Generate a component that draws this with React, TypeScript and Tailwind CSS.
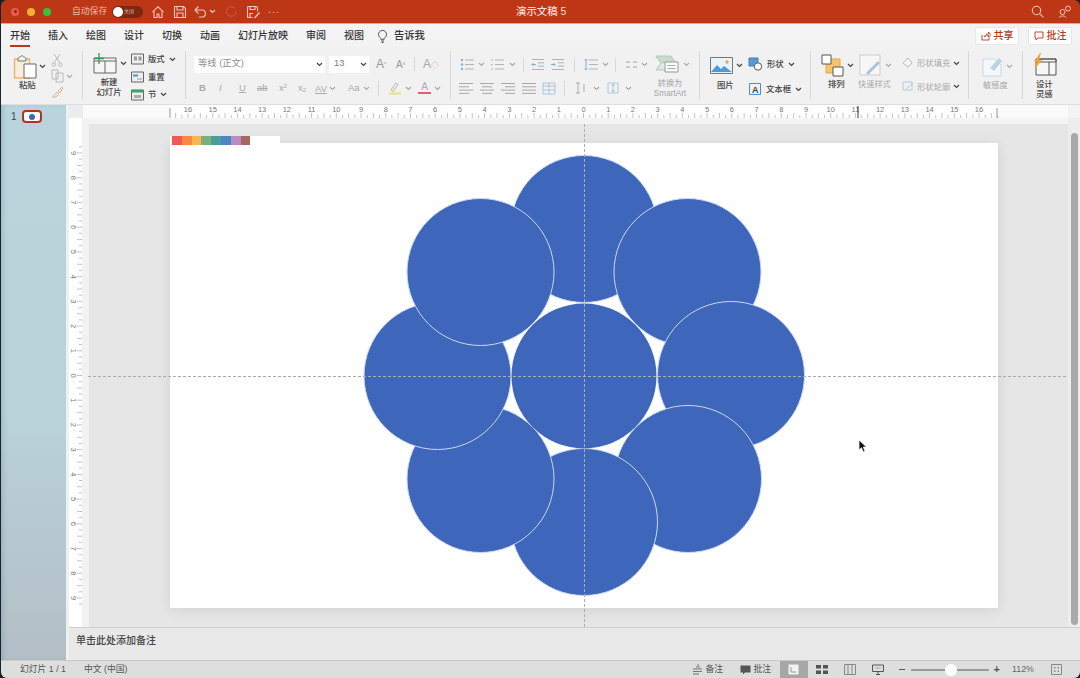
import type { ReactNode } from "react";

const TABS = ["开始", "插入", "绘图", "设计", "切换", "动画", "幻灯片放映", "审阅", "视图"];

const CIRCLES = [
  [584, 229],
  [687.5, 272],
  [731, 375],
  [688, 479],
  [584, 522],
  [480.5, 479],
  [437.5, 376],
  [480.5, 272],
];

const UNIT = 24.72;
const ZERO_X = 583.5;
const ZERO_Y = 375.5;

const PALETTE = ["#ef5a55", "#f58a45", "#f9b54e", "#7fae7c", "#4a9d9c", "#4f86c0", "#b88cc0", "#a5685a"];

function Chev({ faded = false, className = "" }: { faded?: boolean; className?: string }) {
  return (
    <svg width="7" height="5" viewBox="0 0 7 5" className={`shrink-0 ${className}`}>
      <path d="M1 1l2.5 2.5L6 1" fill="none" stroke={faded ? "#aaa" : "#444"} strokeWidth="1.2" />
    </svg>
  );
}

function Ico({ w, h, children, className = "" }: { w: number; h: number; children: ReactNode; className?: string }) {
  return (
    <svg width={w} height={h} viewBox={`0 0 ${w} ${h}`} fill="none" className={`shrink-0 ${className}`}>
      {children}
    </svg>
  );
}

function Sep({ className = "" }: { className?: string }) {
  return <div className={`w-px self-stretch bg-[#d8d8d8] shrink-0 ${className}`} />;
}

function Lines({ kind, stroke = "#a9a9a9" }: { kind: "l" | "c" | "r" | "j"; stroke?: string }) {
  const rows = [
    [1, 15],
    kind === "l" ? [1, 11] : kind === "c" ? [3, 13] : kind === "r" ? [5, 15] : [1, 15],
    [1, 15],
    kind === "l" ? [1, 11] : kind === "c" ? [3, 13] : kind === "r" ? [5, 15] : [1, 15],
  ];
  return (
    <Ico w={16} h={13}>
      {rows.map((r, i) => (
        <path key={i} d={`M${r[0]} ${1.5 + i * 3.3}H${r[1]}`} stroke={stroke} />
      ))}
    </Ico>
  );
}

function IndentIcon({ right = false }: { right?: boolean }) {
  return (
    <Ico w={16} h={13}>
      <path d="M2 1.500h12M8 4.800h6M8 8.100h6M2 11.500h12" stroke="#b3b3b3" />
      <path d={right ? "M1 6.500h4M3.500 5l1.500 1.500L3.500 8" : "M6 6.500H2M3.500 5L2 6.500 3.500 8"} stroke="#7db0dd" />
    </Ico>
  );
}

function TitleBar() {
  return (
    <div className="h-[24px] shrink-0 bg-[#bd3716] border-b border-[#e9a08d] flex items-center relative rounded-t-[6px]">
      <div className="flex items-center gap-[8px] pl-[10px]">
        <div className="size-[8px] rounded-full bg-[#ee5a50] flex items-center justify-center">
          <div className="size-[3px] rounded-full bg-[#8c1f16]" />
        </div>
        <div className="size-[8px] rounded-full bg-[#f5b02e]" />
        <div className="size-[8px] rounded-full bg-[#38c13a]" />
      </div>
      <span className="ml-[21px] text-[8.8px] text-[#ecb7a6] w-[40px]">自动保存</span>
      <div className="w-[31px] h-[12px] rounded-full bg-[#7a2813] flex items-center pl-[1px] gap-[1px]">
        <div className="size-[10px] rounded-full bg-white" />
        <span className="text-[5px] text-[#e0b0a0]">关闭</span>
      </div>
      <Ico w={14} h={14} className="ml-[8px]">
        <path d="M1.5 7.2L7 1.8l5.5 5.4M3 6v6.5h3V9h2v3.5h3V6" stroke="#f1c6b8" strokeWidth="1.1" />
      </Ico>
      <Ico w={14} h={14} className="ml-[8px]">
        <path d="M1.5 1.5h9l2 2v9h-11zM4 1.5v3.5h6V1.5M4 12.5V8h6v4.5" stroke="#f1c6b8" strokeWidth="1.1" />
      </Ico>
      <Ico w={14} h={14} className="ml-[6px]">
        <path d="M2 5h7a3.5 3.5 0 0 1 0 7H6M2 5l3.5-3.5M2 5l3.5 3.5" stroke="#f1c6b8" strokeWidth="1.2" />
      </Ico>
      <Chev className="ml-[2px] [&>path]:stroke-[#f1c6b8]" />
      <Ico w={13} h={13} className="ml-[9px]">
        <path d="M11 6.5A4.8 4.8 0 1 1 9.5 3" stroke="#c9604a" strokeWidth="1" />
      </Ico>
      <Ico w={15} h={14} className="ml-[8px]">
        <path d="M1.5 1.5h9l1 1v4M1.5 1.5v11h5M4 1.5v3h5v-3M4 12V8.5h3" stroke="#f1c6b8" strokeWidth="1.1" />
        <path d="M8 12.5l5-5.5 1 1-5 5.5z" fill="#f1c6b8" />
      </Ico>
      <span className="ml-[7px] text-[11px] leading-none text-[#f1c6b8] tracking-[1px] -mt-[4px]">...</span>
      <span className="absolute left-[515px] top-[4px] text-[10.4px] leading-[15px] font-medium text-[#f6dcd2]">演示文稿 5</span>
      <div className="ml-auto flex items-center gap-[14px] pr-[8px]">
        <Ico w={13} h={13}>
          <circle cx="5.5" cy="5.5" r="4.2" stroke="#f1c6b8" strokeWidth="1.1" />
          <path d="M8.6 8.6l3.8 3.8" stroke="#f1c6b8" strokeWidth="1.1" />
        </Ico>
        <Ico w={14} h={13}>
          <circle cx="4.5" cy="7" r="2.5" stroke="#f1c6b8" />
          <circle cx="10" cy="3.5" r="2.5" stroke="#f1c6b8" />
          <path d="M1 12.500c1-2 6-2 7 0" stroke="#f1c6b8" />
        </Ico>
      </div>
    </div>
  );
}

function TabRow() {
  return (
    <div className="h-[22px] shrink-0 bg-[#f3f3f3] flex items-center pl-[9px] pr-[8px] pt-[1px] text-[#333]">
      <div className="flex gap-[18px] text-[10px] font-medium">
        {TABS.map((t, i) => (
          <div key={t} className="relative leading-[20px]">
            {t}
            {i === 0 && <div className="absolute left-0 right-0 top-[19px] h-[2px] bg-[#bd3716]" />}
          </div>
        ))}
      </div>
      <Ico w={11} h={14} className="ml-[13px]">
        <path d="M3 8.5a4 4 0 1 1 5 0c-.6.5-.8 1-.8 1.8H3.800c0-.8-.2-1.300-.8-1.800zM4 12h3M4.600 13.500h1.800" stroke="#555" />
      </Ico>
      <span className="ml-[6px] text-[10.3px] font-medium">告诉我</span>
      <div className="ml-auto flex gap-[9px] text-[#b5391a] text-[10px] font-medium">
        <div className="w-[44px] h-[18px] bg-white border border-[#e6e6e6] rounded-[2px] flex items-center justify-center gap-[3px]">
          <Ico w={10} h={10}>
            <path d="M1 4v5h7V6.500M3.500 6C4 4 5.500 3 7.500 3V1l2.300 2.700L7.500 6.200V4.500C6 4.500 4.500 5 3.500 6z" stroke="#b5391a" strokeWidth=".9" />
          </Ico>
          共享
        </div>
        <div className="w-[44px] h-[18px] bg-white border border-[#e6e6e6] rounded-[2px] flex items-center justify-center gap-[3px]">
          <Ico w={10} h={10}>
            <path d="M1 1h8v6H4L2 9V7H1z" stroke="#b5391a" strokeWidth=".9" />
          </Ico>
          批注
        </div>
      </div>
    </div>
  );
}

function SmallRow({ icon, label, chev = true, gap = "gap-[4px]", text = "text-[#444]" }: { icon: ReactNode; label: string; chev?: boolean; gap?: string; text?: string }) {
  return (
    <div className={`flex items-center ${gap}`}>
      {icon}
      <span className={`text-[8.4px] font-medium ${text}`}>{label}</span>
      {chev && <Chev />}
    </div>
  );
}

function ClipboardGroup() {
  return (
    <div className="w-[81px] shrink-0 flex">
      <div className="w-[44px] pl-[12px] pt-[3px] flex flex-col">
        <div className="flex items-center gap-[2px]">
          <Ico w={24} h={25}>
            <path d="M1.500 5h15v19h-15z" stroke="#e9b56e" strokeWidth="1.400" fill="#f8eedd" />
            <path d="M5 5c0-2 2-1.500 4-3.500C11 3.500 13 3 13 5v2H5z" stroke="#777" fill="#f3f3f3" />
            <path d="M11 10h12v14H11z" stroke="#666" fill="#fff" />
          </Ico>
          <Chev />
        </div>
        <span className="ml-[6px] text-[8.400px] font-medium text-[#444]">粘贴</span>
      </div>
      <div className="pt-[2px] flex flex-col gap-[2px] pl-[6px]">
        <Ico w={12} h={14}>
          <path d="M3 1l6 9M9 1L3 10" stroke="#b9b9b9" />
          <circle cx="2.800" cy="11.500" r="1.700" stroke="#b9b9b9" />
          <circle cx="9.200" cy="11.500" r="1.700" stroke="#b9b9b9" />
        </Ico>
        <div className="flex items-center gap-[2px]">
          <Ico w={13} h={14}>
            <path d="M1 1h6v9H1zM5 4h7v9H5z" stroke="#b9b9b9" fill="#f1f1f1" />
          </Ico>
          <Chev faded />
        </div>
        <Ico w={13} h={13}>
          <path d="M1 12l5-5 2 2-3 3zM7 6l4-4 1 1-3 5z" stroke="#d3b9a6" fill="#f2e5da" />
        </Ico>
      </div>
    </div>
  );
}

function SlidesGroup() {
  return (
    <div className="w-[102px] shrink-0 flex">
      <div className="w-[48px] pl-[10px] pt-[2px] flex flex-col">
        <div className="flex items-center gap-[3px]">
          <Ico w={24} h={21}>
            <path d="M1 5h22v15H1z" stroke="#666" fill="#f6f6f6" />
            <path d="M1 8h22M12 8v12" stroke="#666" />
            <path d="M6 0v11M1 5.500h10" stroke="#2f9a58" strokeWidth="1.300" />
          </Ico>
          <Chev />
        </div>
        <div className="mt-[3px] -ml-[6px] text-center leading-[10px] text-[8.400px] font-medium text-[#444]">
          新建
          <br />
          幻灯片
        </div>
      </div>
      <div className="flex flex-col gap-[5px] pt-[2px]">
        <SmallRow
          icon={
            <Ico w={13} h={12}>
              <path d="M.500 1h12v10H.500z" stroke="#666" fill="#eee" />
              <path d="M3 3.500h3v4H3zM7.500 3.500h3v4h-3z" fill="#999" />
            </Ico>
          }
          label="版式"
        />
        <SmallRow
          icon={
            <Ico w={13} h={12}>
              <path d="M.500 1h12v10H.500z" stroke="#666" fill="#eee" />
              <path d="M2 3.500h5v2H2z" fill="#4a90d0" />
              <path d="M6 8h5" stroke="#999" />
            </Ico>
          }
          label="重置"
          chev={false}
        />
        <SmallRow
          icon={
            <Ico w={13} h={12}>
              <path d="M.500 1h12v10H.500z" stroke="#666" fill="#eee" />
              <path d="M.500 1h12v2.500H.500z" fill="#3f9f6a" />
              <path d="M3 6h7v3H3z" fill="#aaa" />
            </Ico>
          }
          label="节"
        />
      </div>
    </div>
  );
}

function FontGroup() {
  return (
    <div className="w-[264px] shrink-0 pl-[8px] pt-[4px] flex flex-col text-[#aaa]">
      <div className="flex items-center h-[18px]">
        <div className="w-[131px] h-[17px] bg-white flex items-center justify-between pl-[4px] pr-[2px] text-[9.300px] text-[#909090]">
          等线 (正文)
          <Chev />
        </div>
        <div className="ml-[4px] w-[40px] h-[17px] bg-white flex items-center justify-between pl-[5px] pr-[2px] text-[9.300px] text-[#808080]">
          13
          <Chev />
        </div>
        <span className="ml-[7px] w-[20px] text-[12px] text-[#999]">A<sup className="text-[5px]">^</sup></span>
        <span className="w-[15px] text-[10px] text-[#999]">A<sup className="text-[5px]">v</sup></span>
        <Sep className="h-[14px] !self-auto ml-[3px]" />
        <span className="ml-[8px] text-[12px] text-[#aaa]">A<span className="text-[8px] text-[#e8a0a8]">◇</span></span>
      </div>
      <div className="mt-[7px] flex items-center text-[9.500px] h-[16px]">
        <span className="w-[20px] pl-[5px] font-bold">B</span>
        <span className="w-[20px] pl-[5px] italic">I</span>
        <span className="w-[21px] pl-[5px] underline">U</span>
        <span className="w-[21px] pl-[2px] line-through">ab</span>
        <span className="w-[20px] pl-[3px]">x<sup className="text-[6px]">2</sup></span>
        <span className="w-[19px] pl-[2px]">x<sub className="text-[6px]">2</sub></span>
        <span className="w-[14px] leading-[9px] underline">AV</span>
        <Chev faded />
        <span className="ml-[12px] w-[15px]">Aa</span>
        <Chev faded />
        <Sep className="h-[15px] !self-auto ml-[8px]" />
        <Ico w={14} h={14} className="ml-[9px]">
          <path d="M3 9l5-7 2 1.500-5 7z" stroke="#b5b5b5" />
          <path d="M1 12.500h12" stroke="#e6e27a" strokeWidth="2" />
        </Ico>
        <Chev faded className="ml-[3px]" />
        <div className="ml-[6px] flex flex-col items-center w-[13px] leading-[10px] text-[#aaa] text-[10px]">
          A<div className="w-[13px] h-[2px] bg-[#e75b6c]" />
        </div>
        <Chev faded className="ml-[3px]" />
      </div>
    </div>
  );
}

function ListIcon({ numbered = false }: { numbered?: boolean }) {
  return (
    <Ico w={14} h={13}>
      {[2, 6.5, 11].map((y) => (
        <g key={y}>
          <path d={`M5 ${y}h9`} stroke="#b3b3b3" />
          <circle cx="2" cy={y} r={numbered ? 0.8 : 1.2} fill={numbered ? "#aaa" : "#7db0dd"} />
        </g>
      ))}
    </Ico>
  );
}

function ParagraphGroup() {
  return (
    <div className="w-[248px] shrink-0 pl-[9px] flex">
      <div className="w-[156px] flex flex-col pt-[4px]">
        <div className="flex items-center h-[18px] pt-[1px]">
          <ListIcon />
          <Chev faded className="ml-[4px]" />
          <div className="ml-[5px]"><ListIcon numbered /></div>
          <Chev faded className="ml-[5px]" />
          <Sep className="h-[14px] !self-auto ml-[7px]" />
          <div className="ml-[6px]"><IndentIcon /></div>
          <div className="ml-[4px]"><IndentIcon right /></div>
          <Sep className="h-[14px] !self-auto ml-[8px]" />
          <Ico w={14} h={13} className="ml-[9px]">
            <path d="M5 2h9M5 6.500h9M5 11h9" stroke="#b3b3b3" />
            <path d="M2 1v11M.5 2.500L2 1l1.500 1.500M.5 10.500L2 12l1.500-1.500" stroke="#7db0dd" />
          </Ico>
          <Chev faded className="ml-[4px]" />
          <Sep className="h-[14px] !self-auto ml-[6px]" />
        </div>
        <div className="flex items-center gap-[5px] mt-[7px] h-[16px] -ml-[2px]">
          <Lines kind="l" />
          <Lines kind="c" />
          <Lines kind="r" />
          <Lines kind="j" />
          <Ico w={14} h={13}>
            <path d="M1 1h12v11H1zM7 1v11M1 4h12M1 8h12" stroke="#a9c8d8" />
          </Ico>
          <Sep className="h-[15px] !self-auto ml-[3px]" />
          <Ico w={13} h={14} className="ml-[5px]">
            <path d="M3 1v12M1 3l2-2 2 2M1 11l2 2 2-2M9 3v8" stroke="#aaa" />
          </Ico>
          <Chev faded />
          <Ico w={14} h={12} className="ml-[1px]">
            <path d="M2 1h10v10H2zM7 2v8M5 4l2-2 2 2M5 8l2 2 2-2" stroke="#a9c8d8" />
          </Ico>
          <Chev faded />
        </div>
      </div>
      <div className="flex flex-col ml-[2px] pt-[4px]">
        <div className="flex items-center gap-[2px] h-[19px] pl-[7px]">
          <Ico w={14} h={9}>
            <path d="M1 1h4v2H1zM8 1h4v2H8zM1 6h4v2H1zM8 6h4v2H8z" fill="#c9c9c9" />
          </Ico>
          <Chev faded />
        </div>
      </div>
      <div className="flex flex-col items-center -ml-[4px] w-[52px] pt-[4px]">
        <div className="flex items-center gap-[4px] h-[20px] pl-[5px]">
          <Ico w={24} h={18}>
            <path d="M1 1h15l5 7H6z" fill="#c6dbcb" stroke="#b4cbb9" />
            <path d="M1 1l5 7-5 7h11" fill="#dce9df" stroke="#b4cbb9" />
            <path d="M10 7h13v10H10z" fill="#fafafa" stroke="#999" />
            <path d="M12.500 10.500h8M12.500 13.500h8" stroke="#aaa" />
          </Ico>
          <Chev faded />
        </div>
        <div className="mt-[6px] text-[8.200px] leading-[10px] text-center text-[#a5a5a5]">
          转换为
          <br />
          SmartArt
        </div>
      </div>
    </div>
  );
}

function DrawGroup() {
  return (
    <div className="w-[110px] shrink-0 pl-[10px] flex">
      <div className="w-[38px] flex flex-col pt-[3px]">
        <div className="flex items-center gap-[3px] h-[21px] pt-[2px]">
          <Ico w={23} h={17}>
            <path d="M.500.500h22v16H.500z" stroke="#777" fill="#eaf3fa" />
            <path d="M1 15l6-7 4 4 3-3 8 6z" fill="#4a9bd6" />
            <circle cx="17" cy="5" r="1.700" fill="#f0a05a" />
          </Ico>
          <Chev />
        </div>
        <span className="mt-[4px] ml-[7px] text-[8.400px] font-medium text-[#444]">图片</span>
      </div>
      <div className="flex flex-col gap-[11px] pt-[6px]">
        <SmallRow
          icon={
            <Ico w={15} h={14}>
              <path d="M1 1h9v8H1z" fill="#5b9bd5" stroke="#3f7fb8" />
              <circle cx="10" cy="9.500" r="3.700" fill="#fff" stroke="#555" />
            </Ico>
          }
          label="形状"
        />
        <SmallRow
          icon={
            <Ico w={14} h={14}>
              <path d="M1.500 1.500h11v11h-11z" stroke="#4a90d0" />
              <text x="4" y="10.500" fontSize="9" fontWeight="700" fill="#444">A</text>
            </Ico>
          }
          label="文本框"
        />
      </div>
    </div>
  );
}

function ArrangeGroup() {
  return (
    <div className="w-[157px] shrink-0 pl-[10px] flex">
      <div className="w-[38px] flex flex-col pt-[3px]">
        <div className="flex items-center gap-[3px]">
          <Ico w={23} h={23}>
            <path d="M5 5h14v14H5z" fill="#f8c56b" stroke="#e0aa55" />
            <path d="M1 1h9v9H1z" fill="#fff" stroke="#555" />
            <path d="M12 13h10v9H12z" fill="#fff" stroke="#555" />
          </Ico>
          <Chev />
        </div>
        <span className="mt-[1px] ml-[7px] text-[8.400px] font-medium text-[#444]">排列</span>
      </div>
      <div className="w-[43px] flex flex-col pt-[3px] shrink-0">
        <div className="flex items-center gap-[3px]">
          <Ico w={23} h={23}>
            <path d="M1 1h20v20H1z" fill="#f7f7f7" stroke="#ccc" />
            <path d="M8 20l12-12" stroke="#a8c3e2" strokeWidth="3" />
          </Ico>
          <Chev faded />
        </div>
        <span className="mt-[2px] -ml-[1px] text-[8.200px] text-[#a8a8a8] whitespace-nowrap">快速样式</span>
      </div>
      <div className="flex flex-col gap-[11px] pt-[6px] text-[#aaa]">
        <SmallRow
          gap="gap-[2px]"
          text="text-[#aaa] !font-normal"
          icon={
            <Ico w={12} h={12} className="mr-[1px]">
              <path d="M1 6l5-5 4 5-4 4z" stroke="#bbb" fill="#f5f5f5" />
            </Ico>
          }
          label="形状填充"
        />
        <SmallRow
          gap="gap-[2px]"
          text="text-[#aaa] !font-normal"
          icon={
            <Ico w={13} h={11}>
              <path d="M1 1h9v8H1zM4 8l7-6" stroke="#b5c9dc" />
            </Ico>
          }
          label="形状轮廓"
        />
      </div>
    </div>
  );
}

function Ribbon() {
  return (
    <div className="h-[59px] shrink-0 bg-[#f1f1f1] flex py-[5px] border-b border-[#dedede]">
      <ClipboardGroup />
      <Sep />
      <SlidesGroup />
      <Sep />
      <FontGroup />
      <Sep />
      <ParagraphGroup />
      <Sep />
      <DrawGroup />
      <Sep />
      <ArrangeGroup />
      <Sep />
      <div className="w-[53px] shrink-0 pl-[13px] flex flex-col">
        <div className="flex items-center gap-[2px] pt-[4px]">
          <Ico w={22} h={22}>
            <path d="M1 4h12l6 6v11H1z" fill="#f4f8fb" stroke="#c6d8e6" />
            <path d="M8 13l9-10 3 3-8 10z" fill="#b9d2e6" />
          </Ico>
          <Chev faded />
        </div>
        <span className="mt-[3px] ml-[1px] text-[8.200px] text-[#a8a8a8]">敏感度</span>
      </div>
      <Sep />
      <div className="flex-1 pl-[9px] pt-[2px] flex flex-col">
        <Ico w={25} h={24}>
          <path d="M4 6h20v16H4z" fill="#f7f7f7" stroke="#555" />
          <path d="M4 6h20v3H4zM17 9v13" stroke="#555" />
          <path d="M8 0L2 9h3l-2 7 7-9H7l2-7z" fill="#f3a73b" />
        </Ico>
        <div className="mt-[2px] ml-[4px] text-[8.400px] leading-[10px] font-medium text-[#444]">
          设计
          <br />
          灵感
        </div>
      </div>
    </div>
  );
}

function TopRuler() {
  const ticks = [];
  for (let i = -68; i <= 68; i++) {
    const x = ZERO_X + (i * UNIT) / 4 - 83;
    if (x < 87 || x > 915) continue;
    ticks.push(<path key={i} d={`M${x} ${i % 2 === 0 ? 8 : 10}V13`} stroke="#aaa" strokeWidth=".7" />);
  }
  const labels = [];
  for (let n = -16; n <= 16; n++) {
    labels.push(
      <text key={n} x={ZERO_X + n * UNIT - 83} y="7" fontSize="7.500" fill="#777" textAnchor="middle">
        {Math.abs(n)}
      </text>,
    );
  }
  return (
    <svg width="985" height="13" viewBox="0 0 985 13" className="block">
      <rect width="985" height="13" fill="#fafafa" />
      <rect x="87" width="827" height="13" fill="#fff" />
      {ticks}
      {labels}
      <path d="M87 3V13M914 3V13" stroke="#999" />
      <path d="M775 1V13" stroke="#333" />
    </svg>
  );
}

function LeftRuler() {
  const items = [];
  for (let i = -37; i <= 37; i++) {
    const y = ZERO_Y + (i * UNIT) / 4 - 118;
    const tall = i % 2 === 0;
    items.push(<path key={i} d={`M${tall ? 8 : 10} ${y}H13`} stroke="#aaa" strokeWidth=".7" />);
  }
  for (let n = -9; n <= 9; n++) {
    const y = ZERO_Y + n * UNIT - 118;
    items.push(
      <text key={`n${n}`} x="4.500" y={y} fontSize="7.500" fill="#777" textAnchor="middle" dominantBaseline="central" transform={`rotate(90 4.500 ${y})`}>
        {Math.abs(n)}
      </text>,
    );
  }
  return (
    <svg width="13" height="509" viewBox="0 0 13 509" className="block shrink-0">
      <rect width="13" height="509" fill="#fff" />
      {items}
    </svg>
  );
}

function Slide() {
  return (
    <div className="w-[828px] h-[465px] bg-white shadow-[0_2px_14px_rgba(0,0,0,0.09)] relative">
      <div className="absolute left-0 -top-[7px] w-[110px] h-[9px] bg-white flex pl-[2px]">
        {PALETTE.map((c) => (
          <div key={c} className="w-[9.800px] h-[9px]" style={{ backgroundColor: c }} />
        ))}
      </div>
      <svg width="828" height="465" viewBox="170 143 828 465" className="absolute inset-0 overflow-visible">
        {CIRCLES.map(([cx, cy], i) => (
          <circle key={i} cx={cx} cy={cy} r="73.500" fill="#3e67bc" stroke="#ccd8ec" strokeWidth="1" />
        ))}
        <circle cx="584" cy="376" r="72.500" fill="#3e67bc" />
      </svg>
    </div>
  );
}

function Canvas() {
  return (
    <div className="flex-1 flex relative min-h-0 bg-[#f3f3f3]">
      <LeftRuler />
      <div className="w-[7px] shrink-0 bg-[#f2f2f2]" />
      <div className="flex-1 flex flex-col min-w-0">
        <div className="h-[6px] shrink-0 bg-[#f4f4f4]" />
        <div className="flex-1 bg-[#e6e6e6] pl-[81px] pt-[19px]">
          <Slide />
        </div>
      </div>
      <div className="w-[12px] shrink-0 bg-[#ededed] pt-[15px] pl-[3px]">
        <div className="w-[7px] h-[492px] rounded-full bg-[#a9a9a9]" />
      </div>
      {/* guides run across the slide and the grey area */}
      <svg width="998" height="509" viewBox="69 118 998 509" className="absolute left-0 top-0 pointer-events-none">
        <path d="M584.500 124V627" stroke="#a8adb6" strokeDasharray="3 2" />
        <path d="M88 376.500H1068" stroke="#a8adb6" strokeDasharray="3 2" />
      </svg>
      {/* mouse pointer on the slide */}
      <svg width="10" height="14" viewBox="0 0 10 14" className="absolute left-[789px] top-[321px]">
        <path d="M1 1v10l2.500-2.300L5.300 13l1.700-.8L5.300 8H8.500z" fill="#111" stroke="#fff" strokeWidth=".7" />
      </svg>
    </div>
  );
}

function StatusBar() {
  return (
    <div className="h-[18px] shrink-0 bg-[#dedede] border-t border-[#c9c9c9] flex items-center text-[8.800px] text-[#555] pl-[19px] relative z-10 rounded-b-[6px]">
      <span className="w-[64px]">幻灯片 1 / 1</span>
      <span>中文 (中国)</span>
      <div className="ml-auto flex items-center h-full">
        <Ico w={11} h={11} className="mr-[3px]">
          <path d="M1 5h9M1 7.500h9M1 10h6M4 3h4M5 1h2" stroke="#777" />
        </Ico>
        <span className="w-[34px]">备注</span>
        <Ico w={11} h={10} className="mr-[3px]">
          <path d="M.500 .500h10v7H5L3 9.500v-2H.500z" fill="#555" />
        </Ico>
        <span className="w-[26px]">批注</span>
        <div className="w-[28px] h-full bg-[#a7a7a7] flex items-center justify-center">
          <Ico w={11} h={11}>
            <path d="M.500.500h10v10H.500z" fill="#f2f2f2" />
            <path d="M3 3v5h5" stroke="#999" />
          </Ico>
        </div>
        <Ico w={12} h={9} className="ml-[8px]">
          <path d="M0 0h5v3.500H0zM7 0h5v3.500H7zM0 5.500h5V9H0zM7 5.500h5V9H7z" fill="#555" />
        </Ico>
        <Ico w={12} h={11} className="ml-[16px]">
          <path d="M.500.500h11v10H.500zM4 .500v10M8 .500v10" stroke="#888" />
        </Ico>
        <Ico w={12} h={11} className="ml-[16px]">
          <path d="M.500 1h11v6.500H.500zM6 7.500V10M4 10.500h4" stroke="#555" />
          <path d="M3 4h6" stroke="#aaa" />
        </Ico>
        <span className="ml-[15px] w-[6px] h-[1.500px] bg-[#555]" />
        <div className="ml-[6px] w-[78px] h-[2px] bg-[#999] rounded-full relative">
          <div className="absolute left-[34px] -top-[5px] size-[12px] rounded-full bg-white" />
        </div>
        <span className="ml-[5px] text-[11px] font-bold leading-none text-[#555]">+</span>
        <span className="ml-[12px] w-[24px] text-[#666]">112%</span>
        <Ico w={11} h={11} className="ml-[15px] mr-[18px]">
          <path d="M.500.500h10v10H.500z" stroke="#888" />
          <path d="M3 3h1.500v1.500H3zM6.500 3H8v1.500H6.500zM3 6.500h1.500V8H3zM6.500 6.500H8V8H6.500z" fill="#888" />
        </Ico>
      </div>
    </div>
  );
}

export default function App() {
  return (
    <div className="w-[1080px] h-[678px] bg-[#17242b] pl-[1px] overflow-hidden font-['Liberation_Sans','Noto_Sans_CJK_SC',sans-serif]">
      <div className="h-full flex flex-col">
        <TitleBar />
        <TabRow />
        <Ribbon />
        <div className="flex-1 flex min-h-0">
          <div className="w-[65px] shrink-0 bg-[linear-gradient(180deg,#b9d4dc_0%,#b9d2d9_55%,#b3bec6_100%)] shadow-[inset_4px_0_6px_-4px_rgba(30,70,90,0.3)] flex items-start pt-[5px] pl-[10px] gap-[5px]">
            <span className="text-[10px] leading-[14px] text-[#444]">1</span>
            <div className="w-[20px] h-[13px] rounded-[4px] border-2 border-[#a9381d] bg-white flex items-center justify-center">
              <div className="size-[6px] rounded-full bg-[#3e67bc]" />
            </div>
          </div>
          <div className="w-[3px] shrink-0 bg-[#eef1f1]" />
          <div className="flex-1 flex flex-col min-w-0">
            <div className="h-[13px] shrink-0 flex bg-[#f3f3f3]">
              <div className="w-[14px] shrink-0 bg-[#ececec]" />
              <TopRuler />
            </div>
            <Canvas />
            <div className="h-[33px] shrink-0 bg-[#e8e8e8] border-t border-[#cfcfcf] pl-[7px] pb-[8px] flex items-center text-[10px] font-medium text-[#444]">
              单击此处添加备注
            </div>
          </div>
        </div>
        <StatusBar />
      </div>
    </div>
  );
}
